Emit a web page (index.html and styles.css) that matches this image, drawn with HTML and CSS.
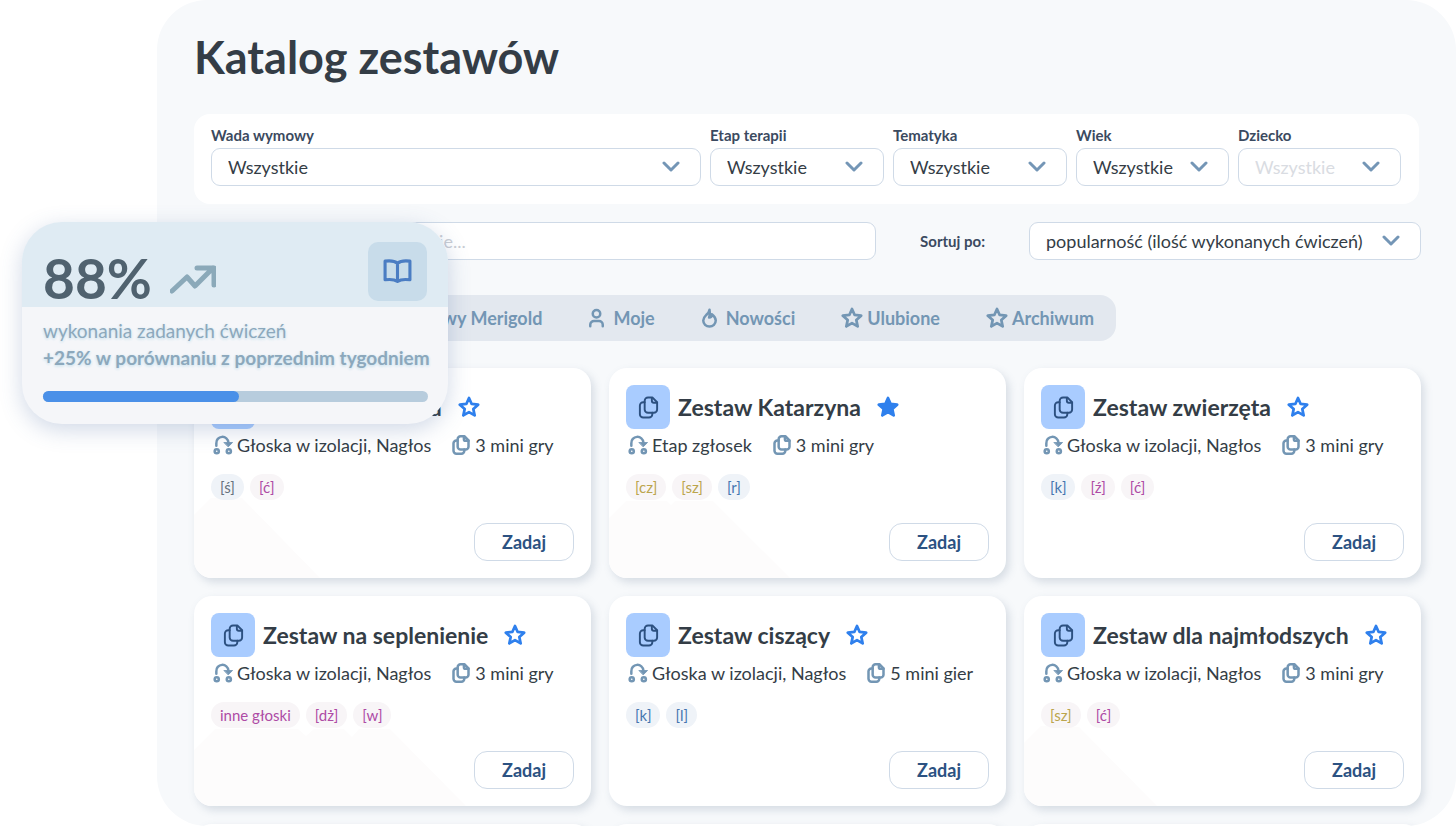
FILE: index.html
```html
<!DOCTYPE html>
<html lang="pl">
<head>
<meta charset="utf-8">
<meta name="viewport" content="width=device-width, initial-scale=1">
<title>Katalog zestawów</title>
<link rel="stylesheet" href="styles.css">
</head>
<body>
<svg class="sprite" aria-hidden="true">
  <symbol id="chevron" viewBox="0 0 18 12"><path d="M2 2l7 7 7-7"/></symbol>
  <symbol id="star" viewBox="0 0 24 24"><path d="M12 2.200l2.900 6.500 7.100.8-5.300 4.700 1.500 7-6.200-3.600-6.200 3.600 1.500-7L2 9.500l7.100-.8z"/></symbol>
  <symbol id="copy" viewBox="0 0 24 24"><path d="M11.500 1.500H16l5 5V14a3.500 3.500 0 0 1-3.500 3.500h-6A3.500 3.500 0 0 1 8 14V5a3.500 3.500 0 0 1 3.500-3.500z"/><path d="M15.500 2v3a2 2 0 0 0 2 2H21M8 6.500H6.500A3.500 3.500 0 0 0 3 10v9a3.500 3.500 0 0 0 3.500 3.500h6a3.500 3.500 0 0 0 3.500-3.500v-1.500"/></symbol>
  <symbol id="route" viewBox="0 0 24 24"><path d="M4 13v-3a7 7 0 0 1 14.500-1v2"/><path class="solid" d="M13.500 9h10L18.500 14z"/><circle cx="4.500" cy="19.500" r="2.500"/><circle cx="19" cy="19.500" r="2.500"/></symbol>
  <symbol id="person" viewBox="0 0 20 24"><circle cx="10" cy="7" r="4.500"/><path d="M2.500 22v-2A4.500 4.500 0 0 1 7 15.500h6a4.500 4.500 0 0 1 4.500 4.500v2"/></symbol>
  <symbol id="flame" viewBox="0 0 20 24"><path d="M10 2c1 4 1 6-.5 9.500 2 0 3.300-1.500 3.300-4 3 2.500 4.700 4.500 4.700 7.500a7.500 7.300 0 0 1-15 0c0-3.500 2-5 4.500-7.500 1.500-1.500 2.500-3 3-5.500z"/></symbol>
</svg>

<div class="stage">
  <main class="panel">
    <h1 class="title">Katalog zestawów</h1>

    <form class="filters">
      <div class="field">
        <label class="label" for="defect">Wada wymowy</label>
        <div class="select"><select id="defect"><option>Wszystkie</option></select><svg class="chevron"><use href="#chevron"/></svg></div>
      </div>
      <div class="field">
        <label class="label" for="stage">Etap terapii</label>
        <div class="select"><select id="stage"><option>Wszystkie</option></select><svg class="chevron"><use href="#chevron"/></svg></div>
      </div>
      <div class="field">
        <label class="label" for="topic">Tematyka</label>
        <div class="select"><select id="topic"><option>Wszystkie</option></select><svg class="chevron"><use href="#chevron"/></svg></div>
      </div>
      <div class="field">
        <label class="label" for="age">Wiek</label>
        <div class="select"><select id="age"><option>Wszystkie</option></select><svg class="chevron"><use href="#chevron"/></svg></div>
      </div>
      <div class="field">
        <label class="label" for="child">Dziecko</label>
        <div class="select"><select id="child" disabled><option>Wszystkie</option></select><svg class="chevron"><use href="#chevron"/></svg></div>
      </div>
    </form>

    <div class="search-row">
      <input class="search" type="search" aria-label="Szukaj" placeholder="Szukaj zestawu po jego nazwie...">
      <label class="label" for="sort">Sortuj po:</label>
      <div class="select sort"><select id="sort"><option>popularność (ilość wykonanych ćwiczeń)</option></select><svg class="chevron"><use href="#chevron"/></svg></div>
    </div>

    <nav class="tabs">
      <button class="tab" type="button">Zestawy Merigold</button>
      <button class="tab" type="button"><svg class="icon"><use href="#person"/></svg>Moje</button>
      <button class="tab" type="button"><svg class="icon"><use href="#flame"/></svg>Nowości</button>
      <button class="tab tab-star" type="button"><svg class="icon"><use href="#star"/></svg>Ulubione</button>
      <button class="tab tab-star" type="button"><svg class="icon"><use href="#star"/></svg>Archiwum</button>
    </nav>

    <section class="cards">
      <article class="card">
        <svg class="cast"><path d="M17 130L0 147V210H126L48 130z"/></svg>
        <header class="card-head"><span class="badge"><svg><use href="#copy"/></svg></span><h2>Zestaw Weronika</h2><button class="fav" type="button" aria-label="Ulubione"><svg><use href="#star"/></svg></button></header>
        <div class="meta"><span><svg class="route"><use href="#route"/></svg>Głoska w izolacji, Nagłos</span><span><svg class="copy"><use href="#copy"/></svg>3 mini gry</span></div>
        <div class="tags"><span class="tag gray">[ś]</span><span class="tag pink">[ć]</span></div>
        <button class="assign" type="button">Zadaj</button>
      </article>
      <article class="card">
        <svg class="cast"><path d="M17 133L0 150V210H181L104 133H66L62 137L58 133z"/></svg>
        <header class="card-head"><span class="badge"><svg><use href="#copy"/></svg></span><h2>Zestaw Katarzyna</h2><button class="fav on" type="button" aria-label="Ulubione"><svg><use href="#star"/></svg></button></header>
        <div class="meta"><span><svg class="route"><use href="#route"/></svg>Etap zgłosek</span><span><svg class="copy"><use href="#copy"/></svg>3 mini gry</span></div>
        <div class="tags"><span class="tag gold">[cz]</span><span class="tag gold">[sz]</span><span class="tag blue">[r]</span></div>
        <button class="assign" type="button">Zadaj</button>
      </article>
      <article class="card">
        <header class="card-head"><span class="badge"><svg><use href="#copy"/></svg></span><h2>Zestaw zwierzęta</h2><button class="fav" type="button" aria-label="Ulubione"><svg><use href="#star"/></svg></button></header>
        <div class="meta"><span><svg class="route"><use href="#route"/></svg>Głoska w izolacji, Nagłos</span><span><svg class="copy"><use href="#copy"/></svg>3 mini gry</span></div>
        <div class="tags"><span class="tag blue">[k]</span><span class="tag pink">[ź]</span><span class="tag pink">[ć]</span></div>
        <button class="assign" type="button">Zadaj</button>
      </article>
      <article class="card">
        <svg class="cast"><path d="M21 133L0 154V210H272L196 133H165L158 141L150 133H120L112 140L104 133z"/></svg>
        <header class="card-head"><span class="badge"><svg><use href="#copy"/></svg></span><h2>Zestaw na seplenienie</h2><button class="fav" type="button" aria-label="Ulubione"><svg><use href="#star"/></svg></button></header>
        <div class="meta"><span><svg class="route"><use href="#route"/></svg>Głoska w izolacji, Nagłos</span><span><svg class="copy"><use href="#copy"/></svg>3 mini gry</span></div>
        <div class="tags"><span class="tag pink">inne głoski</span><span class="tag pink">[dż]</span><span class="tag pink">[w]</span></div>
        <button class="assign" type="button">Zadaj</button>
      </article>
      <article class="card">
        <header class="card-head"><span class="badge"><svg><use href="#copy"/></svg></span><h2>Zestaw ciszący</h2><button class="fav" type="button" aria-label="Ulubione"><svg><use href="#star"/></svg></button></header>
        <div class="meta"><span><svg class="route"><use href="#route"/></svg>Głoska w izolacji, Nagłos</span><span><svg class="copy"><use href="#copy"/></svg>5 mini gier</span></div>
        <div class="tags"><span class="tag blue">[k]</span><span class="tag blue">[l]</span></div>
        <button class="assign" type="button">Zadaj</button>
      </article>
      <article class="card">
        <svg class="cast"><path d="M17 130L0 147V210H133L55 131z"/></svg>
        <header class="card-head"><span class="badge"><svg><use href="#copy"/></svg></span><h2>Zestaw dla najmłodszych</h2><button class="fav" type="button" aria-label="Ulubione"><svg><use href="#star"/></svg></button></header>
        <div class="meta"><span><svg class="route"><use href="#route"/></svg>Głoska w izolacji, Nagłos</span><span><svg class="copy"><use href="#copy"/></svg>3 mini gry</span></div>
        <div class="tags"><span class="tag gold">[sz]</span><span class="tag pink">[ć]</span></div>
        <button class="assign" type="button">Zadaj</button>
      </article>
      <article class="card"></article>
      <article class="card"></article>
      <article class="card"></article>
    </section>
  </main>

  <aside class="stat">
    <div class="stat-top">
      <strong class="percent">88%</strong>
      <svg class="trend" viewBox="0 0 46 30"><path d="M2 26L17 12l8 9L43 3M27 3h17v17"/></svg>
      <span class="book"><svg viewBox="0 0 28 24"><path d="M14 4C11 1.500 6 1.500 2 2v18c4-.5 9-.5 12 1.500 3-2 8-2 12-1.500V2c-4-.5-9-.5-12 2zM14 4v17"/></svg></span>
    </div>
    <div class="stat-body">
      <p>wykonania zadanych ćwiczeń</p>
      <p class="change">+25% w porównaniu z poprzednim tygodniem</p>
      <div class="bar"><div class="bar-fill"></div></div>
    </div>
  </aside>
</div>
</body>
</html>
```

FILE: styles.css
```css
* { box-sizing: border-box; }
body {
  margin: 0;
  background: #fff;
  color: #343d46;
  font-family: Lato, "Open Sans", sans-serif;
  font-size: 18px;
}
h1, h2, p { margin: 0; }
button, select, input { font: inherit; color: inherit; }
button { cursor: pointer; }
svg {
  display: block;
  flex: none;
  fill: none;
  stroke: currentColor;
  stroke-width: 2;
  stroke-linecap: round;
  stroke-linejoin: round;
}
.sprite { position: absolute; width: 0; height: 0; }

.stage { position: relative; height: 100vh; overflow: hidden; padding-left: 157px; }
.panel {
  height: 100%;
  overflow: hidden;
  padding: 30px 35px 0 37px;
  border-radius: 50px;
  background: #f7f9fb;
}
.title { font-size: 45px; line-height: 54px; font-weight: 700; }

.filters {
  display: grid;
  grid-template-columns: minmax(0, 1fr) 174px 174px 153px 163px;
  gap: 9px;
  margin: 30px 2px 18px 0;
  padding: 12px 18px 18px 17px;
  border-radius: 16px;
  background: #fff;
}
.label { display: block; font-size: 15px; line-height: 18px; font-weight: 700; color: #3b4a60; }
.field .label { margin-bottom: 4px; }
.select { display: grid; align-items: center; }
.select > * { grid-area: 1 / 1; }
.select select, .search {
  width: 100%;
  height: 38px;
  padding: 0 16px;
  border: 1px solid #cfdae7;
  border-radius: 9px;
  background: #fff;
  appearance: none;
  outline: 0;
  opacity: 1;
}
.select select:disabled { color: #d9dce2; }
.chevron {
  justify-self: end;
  width: 18px;
  height: 12px;
  margin-right: 21px;
  color: #7496b6;
  stroke-width: 3;
  pointer-events: none;
}

.search-row {
  display: grid;
  grid-template-columns: minmax(0, 1fr) auto 392px;
  align-items: center;
  column-gap: 44px;
}
.search::placeholder { color: #c9cdd4; }

.tabs {
  display: flex;
  justify-content: flex-end;
  align-items: center;
  gap: 46px;
  max-width: 922px;
  height: 46px;
  margin: 35px 0 27px;
  padding-right: 22px;
  border-radius: 16px;
  background: #e3e8ef;
}
.tab {
  display: flex;
  align-items: center;
  gap: 8px;
  padding: 0;
  border: 0;
  background: none;
  color: #7396b4;
  font-weight: 700;
}
.tab .icon { width: 17px; height: 20px; stroke-width: 3; }
.tab-star { gap: 4px; }
.tab-star .icon { width: 22px; height: 22px; }

.cards { display: grid; grid-template-columns: repeat(3, minmax(0, 1fr)); gap: 18px; }
.card {
  position: relative;
  display: flex;
  flex-direction: column;
  min-height: 210px;
  padding: 17px;
  border-radius: 18px;
  background: #fff;
  box-shadow: 3px 4px 9px rgba(95, 120, 145, .22);
}
.card > * { position: relative; }
.card > .cast {
  position: absolute;
  left: 0;
  bottom: 0;
  width: 290px;
  height: 210px;
  border-radius: 0 0 0 18px;
  fill: #fdfcfc;
  stroke: none;
}
.card-head { display: flex; align-items: center; }
.badge {
  display: grid;
  place-items: center;
  width: 44px;
  height: 44px;
  border-radius: 8px;
  background: #a9ccff;
  color: #2c5080;
}
.badge svg { width: 23px; height: 23px; }
.card h2 { margin: 0 16px 0 8px; font-size: 23px; line-height: 28px; font-weight: 700; white-space: nowrap; }
.fav { padding: 0; border: 0; background: none; color: #2f80ed; }
.fav svg { width: 22px; height: 22px; stroke-width: 3; }
.fav.on svg { fill: currentColor; }
.meta { display: flex; gap: 18px; margin-top: 5px; line-height: 22px; white-space: nowrap; }
.meta span { display: flex; align-items: center; gap: 4px; }
.meta svg { width: 20px; height: 20px; margin-left: 2px; color: #7396b4; stroke-width: 3; }
.solid { fill: currentColor; stroke-width: 1; }
.tags { display: flex; gap: 6px; margin-top: 18px; }
.tag { padding: 0 9px; border-radius: 13px; font-size: 15px; line-height: 26px; background: #f8f5f7; }
.gray { background: #eff3f8; color: #66727e; }
.blue { background: #eff3f8; color: #4576b0; }
.pink { color: #ae4ba5; }
.gold { color: #bba54d; }
.assign {
  align-self: flex-end;
  width: 100px;
  height: 38px;
  margin-top: auto;
  border: 1px solid #cfdae7;
  border-radius: 13px;
  background: #fff;
  color: #2c5282;
  font-weight: 700;
}

.stat {
  position: absolute;
  left: 22px;
  top: 222px;
  width: 426px;
  border-radius: 40px;
  overflow: hidden;
  background: #f5f6f9;
  box-shadow: 0 6px 22px rgba(70, 105, 160, .25);
}
.stat-top { display: flex; height: 85px; padding: 20px 21px 0; background: #dfebf3; }
.percent { margin-top: 4px; font-size: 55px; line-height: 64px; color: #50626f; }
.trend { width: 46px; height: 30px; margin: 23px 0 0 18px; color: #8ba9b9; stroke-width: 5; }
.book {
  display: grid;
  place-items: center;
  width: 59px;
  height: 59px;
  margin-left: auto;
  border-radius: 10px;
  background: #c8dcea;
  color: #4b7dc3;
}
.book svg { width: 29px; height: 25px; stroke-width: 3; }
.stat-body {
  padding: 10px 20px 22px 21px;
  font-size: 19px;
  line-height: 27px;
  color: #8ca8bc;
  text-shadow: 0 1px 3px #d3e6f0, 0 1px 3px #d3e6f0;
}
.change { font-weight: 700; white-space: nowrap; }
.bar { height: 11px; margin-top: 20px; border-radius: 6px; background: #b7ccdd; }
.bar-fill { width: 51%; height: 100%; border-radius: 6px; background: #4a90e8; }
```
